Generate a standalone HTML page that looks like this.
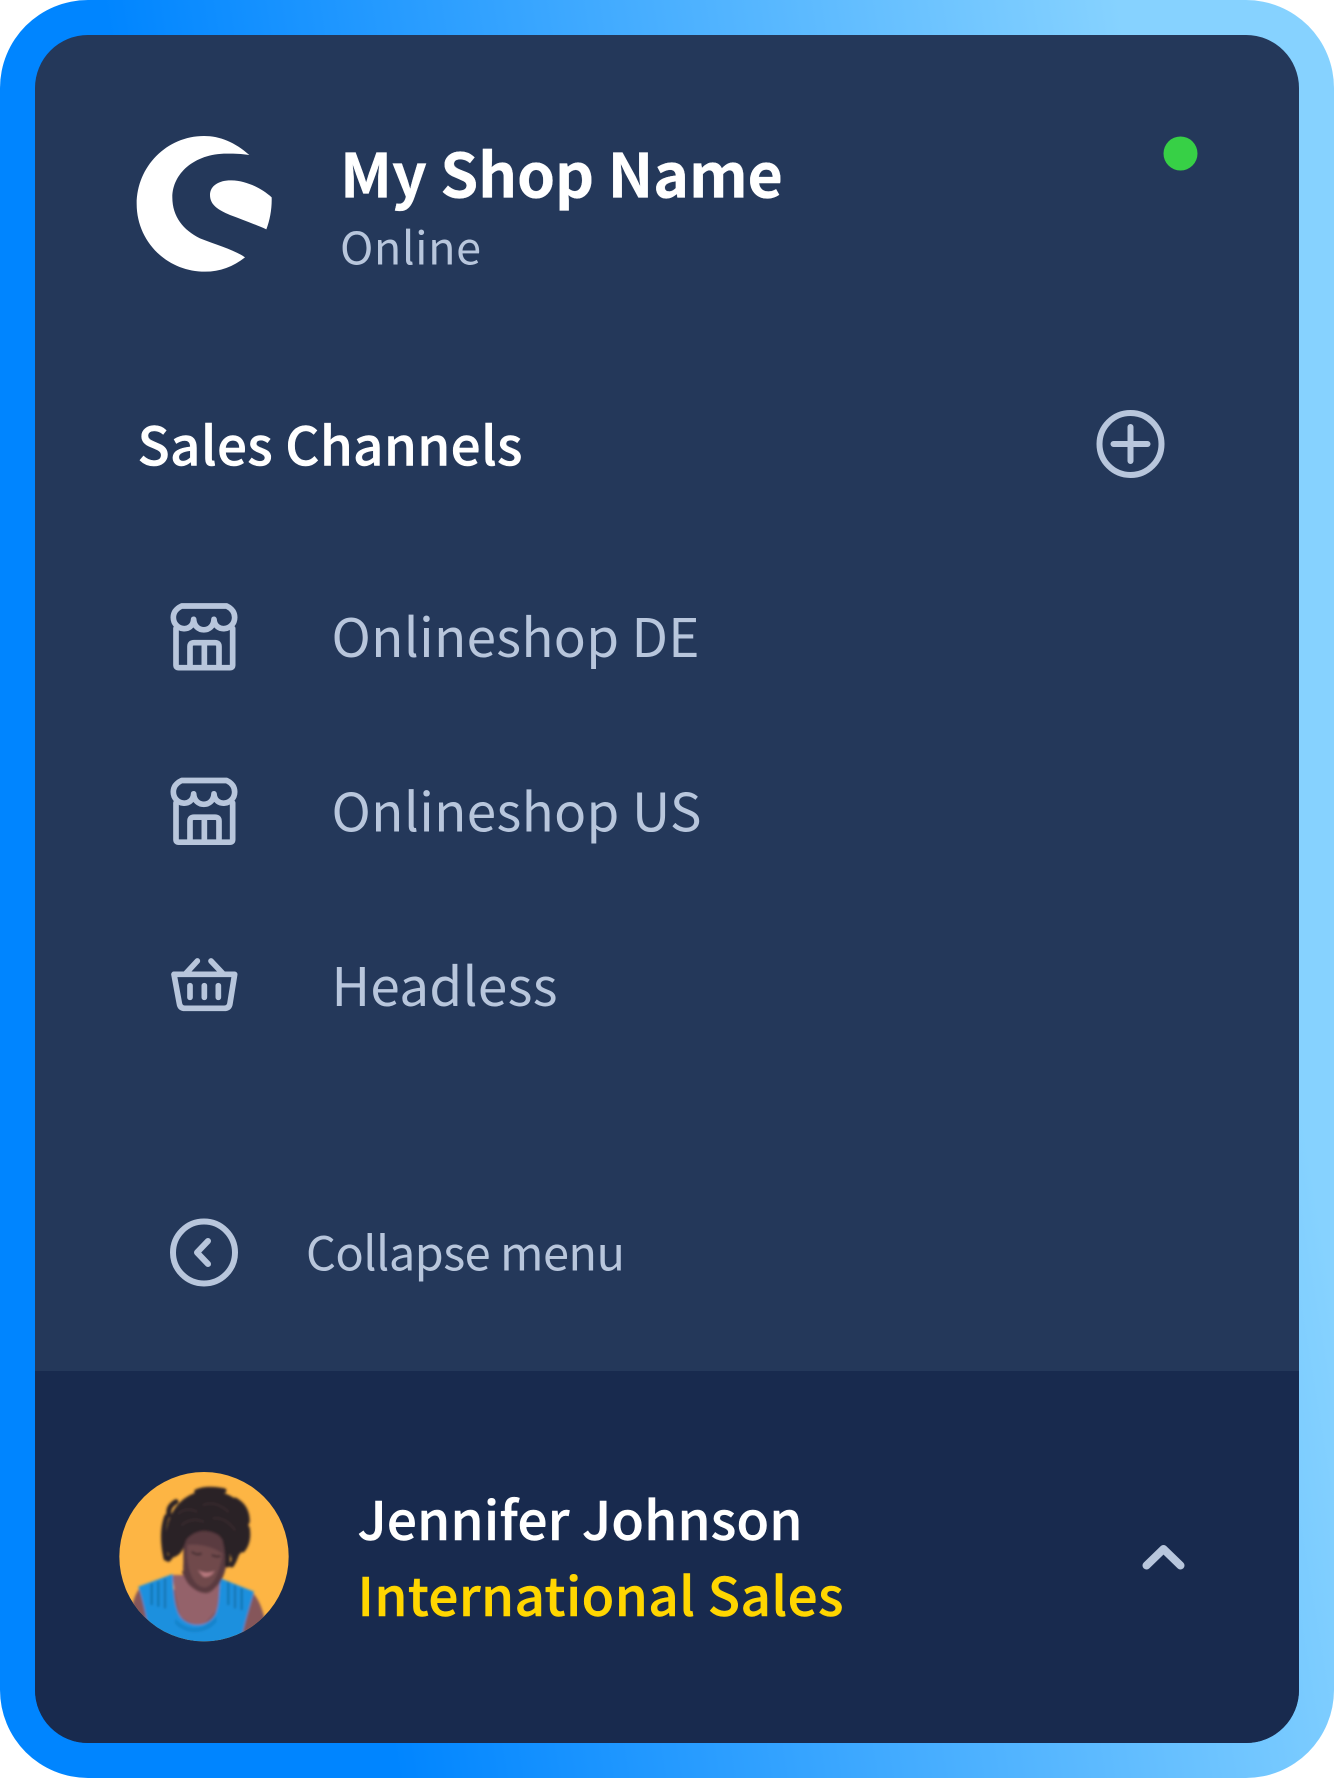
<!DOCTYPE html>
<html lang="en">
<head>
<meta charset="utf-8">
<title>My Shop Name</title>
<style>
html,body{margin:0;padding:0;background:#fff}
svg{display:block}
text{font-family:"Noto Sans CJK JP","Liberation Sans",sans-serif}
</style>
</head>
<body>
<svg xmlns="http://www.w3.org/2000/svg" width="1334" height="1778" viewBox="0 0 1334 1778">
<defs>
<linearGradient id="bg" gradientUnits="userSpaceOnUse" x1="250" y1="889" x2="1240" y2="725">
<stop offset="0" stop-color="#0085ff"/><stop offset="1" stop-color="#86d2ff"/>
</linearGradient>
<clipPath id="inner"><rect x="35" y="35" width="1264" height="1708" rx="53"/></clipPath>
<clipPath id="av"><circle cx="312" cy="320" r="254"/></clipPath>
<filter id="b1" x="-10%" y="-10%" width="120%" height="120%"><feGaussianBlur stdDeviation="4"/></filter>
<g id="store" fill="none" stroke="#b8c6dc" stroke-width="17" stroke-linecap="round" stroke-linejoin="round">
<path d="M95 78H230Q254 90 254 112C254 152 195 160 192 118C190 160 133 160 131 118C128 160 70 152 70 112Q70 90 95 78Z"/>
<path d="M78 145V255Q78 263 86 263H240Q248 263 248 255V145"/>
<path d="M120 263V200Q120 188 132 188H195Q207 188 207 200V263M163 188V263"/>
</g>
</defs>
<rect x="0" y="0" width="1334" height="1778" rx="88" fill="url(#bg)"/>
<rect x="35" y="35" width="1264" height="1708" rx="53" fill="#24385a"/>
<rect x="35" y="1371" width="1264" height="372" fill="#182a4e" clip-path="url(#inner)"/>

<!-- logo -->
<svg x="100" y="110" width="220" height="190" viewBox="0 0 660 570">
<path fill="#fff" d="M448 135C405 97 360 78 312 78C200 78 110 170 110 282C110 394 200 485 315 485C360 485 400 470 435 442C405 420 350 405 300 385C250 360 217 320 217 262C217 190 285 127 390 131C415 131 432 133 448 135Z"/>
<path fill="#fff" d="M330 255C330 225 360 210 395 211C440 212 485 235 515 262C516 295 510 330 499 358C470 345 430 330 390 315C355 300 330 285 330 255Z"/>
</svg>

<text x="340" y="197.500" font-size="61" font-weight="700" fill="#fff" stroke="#fff" stroke-width="0.3" textLength="443">My Shop Name</text>
<text x="340" y="264.500" font-size="45" fill="#b8c6dc" textLength="141">Online</text>
<circle cx="1180.500" cy="153.5" r="17" fill="#37d046"/>

<text x="137.500" y="465.500" font-size="53" font-weight="500" fill="#fff" stroke="#fff" stroke-width="0.5" textLength="385">Sales Channels</text>
<circle cx="1130.5" cy="444" r="31" fill="none" stroke="#b8c6dc" stroke-width="6"/>
<path d="M1130.5 427V461M1113.5 444H1147.5" fill="none" stroke="#b8c6dc" stroke-width="6" stroke-linecap="round"/>

<svg x="150" y="580" width="120" height="120" viewBox="0 0 360 360"><use href="#store"/></svg>
<text x="331.5" y="657" font-size="53" fill="#b8c6dc" textLength="368">Onlineshop DE</text>
<svg x="150" y="754.500" width="120" height="120" viewBox="0 0 360 360"><use href="#store"/></svg>
<text x="331.5" y="831.500" font-size="53" fill="#b8c6dc" textLength="370">Onlineshop US</text>

<svg x="150" y="940" width="120" height="110" viewBox="0 0 360 330" fill="none" stroke="#b8c6dc" stroke-width="17" stroke-linecap="round" stroke-linejoin="round">
<path d="M72 103H254L240 190Q238 205 222 205H105Q90 205 88 190Z"/>
<path d="M108 100L142 63M183 63L218 100"/>
<path d="M120 137V172M163 137V172M205 137V172"/>
</svg>
<text x="331.5" y="1006" font-size="53" fill="#b8c6dc" textLength="226">Headless</text>

<circle cx="204" cy="1252.5" r="31" fill="none" stroke="#b8c6dc" stroke-width="6"/>
<path d="M208 1241L197 1252.5L208 1264" fill="none" stroke="#b8c6dc" stroke-width="6" stroke-linecap="round" stroke-linejoin="round"/>
<text x="306" y="1270.500" font-size="47" fill="#b8c6dc" textLength="319">Collapse menu</text>

<!-- avatar -->
<svg x="100" y="1450" width="210" height="210" viewBox="0 0 630 630">
<g clip-path="url(#av)">
<rect width="630" height="630" fill="#fdb544"/>
<g filter="url(#b1)">
<path fill="#85575a" d="M118 415C100 440 95 470 90 510L150 590H430L495 510C485 470 475 445 455 425Z"/>
<path fill="#94626a" d="M215 375H365L350 480L300 535L240 500Z"/>
<path fill="#5f3f42" d="M245 365C265 410 290 430 320 430C345 425 355 400 362 375L350 360H255Z"/>
<path fill="#1a90de" d="M115 410L218 372C220 420 222 480 245 505C270 530 320 535 345 495C360 465 355 420 362 385L462 425C450 470 435 510 420 585H150C145 530 135 470 115 410Z"/>
<path fill="none" stroke="#156fa8" stroke-width="6" d="M155 400V465M175 395V470M195 385V475M385 395V465M405 405V475M425 415V480"/>
<path fill="#1070b0" d="M225 505C260 545 315 545 348 498L350 515C320 555 255 555 225 520Z" opacity=".4"/>
<path fill="#5a3b3f" d="M250 240H380V340C372 390 350 425 310 425C270 420 245 390 250 340Z"/>
<path fill="#6f494c" d="M262 285C285 280 340 288 368 312C358 370 338 415 310 412C275 405 258 350 262 285Z"/>
<path fill="#b7787e" d="M293 360Q320 375 345 362Q330 385 310 380Z"/>
<path fill="none" stroke="#38282b" stroke-width="5" d="M275 305Q290 318 305 310M335 315Q350 322 362 318"/>
<path fill="#2a2226" d="M200 235C212 175 250 135 300 125C352 116 400 132 428 168C452 205 452 262 428 302C412 322 402 328 397 335C387 302 375 275 355 255C320 235 285 240 260 268C250 290 250 312 220 322C192 312 192 270 200 235Z"/>
<g fill="none" stroke="#2a2226" stroke-width="15" stroke-linecap="round">
<path d="M200 200Q182 250 198 325"/>
<path d="M228 155Q202 170 207 195"/>
<path d="M290 125Q320 112 372 122"/>
<path d="M405 150Q442 170 442 215"/>
<path d="M442 235Q448 275 428 300"/>
<path d="M415 290Q410 320 395 345"/>
<path d="M235 265Q230 300 205 328"/>
<path d="M375 270Q385 310 382 345"/>
</g>
<g fill="none" stroke="#4a3b3e" stroke-width="4" stroke-linecap="round" opacity=".55">
<path d="M235 190Q260 170 290 185M310 165Q345 150 385 185M245 225Q275 200 310 215M340 205Q375 200 405 240"/>
</g>
</g>
</g>
</svg>

<text x="357.500" y="1540" font-size="53" font-weight="500" fill="#fff" stroke="#fff" stroke-width="0.5" textLength="445">Jennifer Johnson</text>
<text x="357.500" y="1616" font-size="53" font-weight="500" fill="#ffd600" stroke="#ffd600" stroke-width="0.5" textLength="486">International Sales</text>
<path d="M1146.500 1565.500L1163.500 1549L1180.500 1565.500" fill="none" stroke="#b8c6dc" stroke-width="8" stroke-linecap="round" stroke-linejoin="round"/>
</svg>
</body>
</html>
